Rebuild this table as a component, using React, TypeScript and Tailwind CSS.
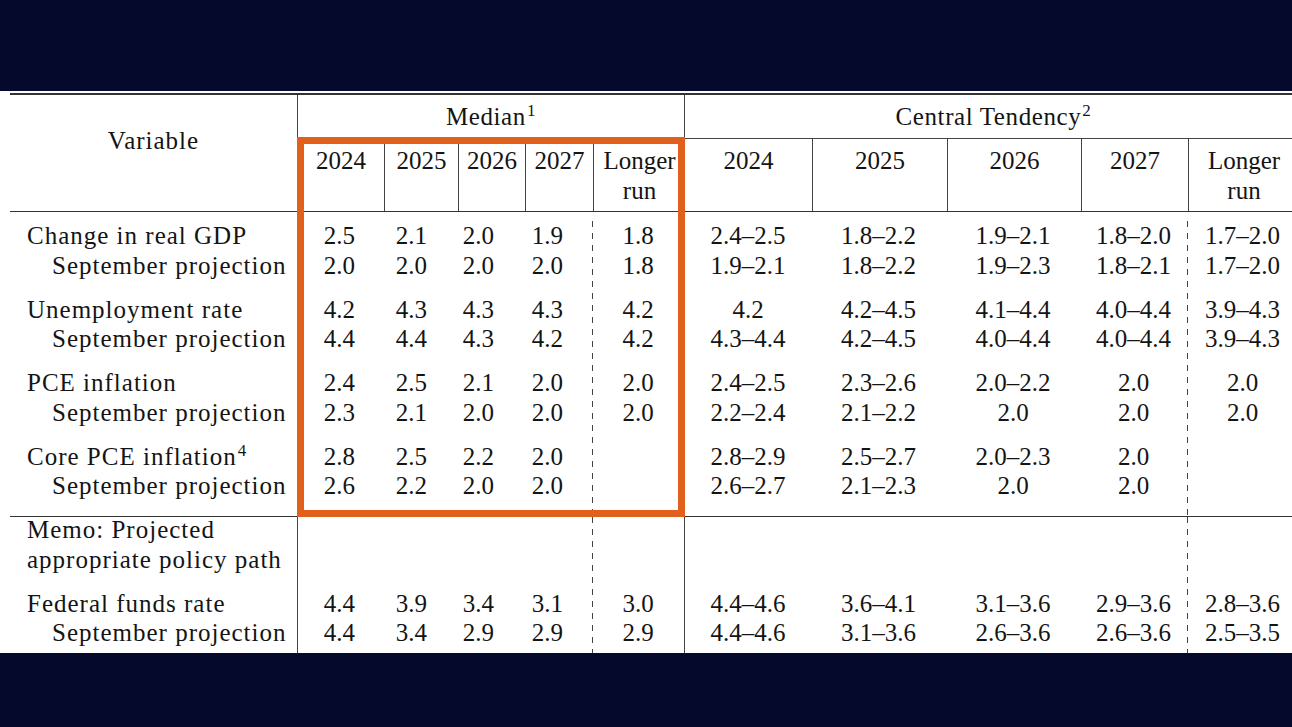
import React from 'react'

type Row = { label: string; sup?: string; sub?: boolean; v: string[] }

const E = ['', '', '', '', '', '', '', '', '', '']

const upper: Row[][] = [
  [
    { label: 'Change in real GDP', v: ['2.5', '2.1', '2.0', '1.9', '1.8', '2.4–2.5', '1.8–2.2', '1.9–2.1', '1.8–2.0', '1.7–2.0'] },
    { label: 'September projection', sub: true, v: ['2.0', '2.0', '2.0', '2.0', '1.8', '1.9–2.1', '1.8–2.2', '1.9–2.3', '1.8–2.1', '1.7–2.0'] },
  ],
  [
    { label: 'Unemployment rate', v: ['4.2', '4.3', '4.3', '4.3', '4.2', '4.2', '4.2–4.5', '4.1–4.4', '4.0–4.4', '3.9–4.3'] },
    { label: 'September projection', sub: true, v: ['4.4', '4.4', '4.3', '4.2', '4.2', '4.3–4.4', '4.2–4.5', '4.0–4.4', '4.0–4.4', '3.9–4.3'] },
  ],
  [
    { label: 'PCE inflation', v: ['2.4', '2.5', '2.1', '2.0', '2.0', '2.4–2.5', '2.3–2.6', '2.0–2.2', '2.0', '2.0'] },
    { label: 'September projection', sub: true, v: ['2.3', '2.1', '2.0', '2.0', '2.0', '2.2–2.4', '2.1–2.2', '2.0', '2.0', '2.0'] },
  ],
  [
    { label: 'Core PCE inflation', sup: '4', v: ['2.8', '2.5', '2.2', '2.0', '', '2.8–2.9', '2.5–2.7', '2.0–2.3', '2.0', ''] },
    { label: 'September projection', sub: true, v: ['2.6', '2.2', '2.0', '2.0', '', '2.6–2.7', '2.1–2.3', '2.0', '2.0', ''] },
  ],
]

const lower: Row[][] = [
  [
    { label: 'Memo: Projected', v: E },
    { label: 'appropriate policy path', v: E },
  ],
  [
    { label: 'Federal funds rate', v: ['4.4', '3.9', '3.4', '3.1', '3.0', '4.4–4.6', '3.6–4.1', '3.1–3.6', '2.9–3.6', '2.8–3.6'] },
    { label: 'September projection', sub: true, v: ['4.4', '3.4', '2.9', '2.9', '2.9', '4.4–4.6', '3.1–3.6', '2.6–3.6', '2.6–3.6', '2.5–3.5'] },
  ],
]

const dash =
  'bg-[linear-gradient(to_bottom,#444_0_6px,transparent_6px_12px)] bg-[length:1px_12px] bg-repeat-y'

const cols = [
  'w-[287px] pl-[17px] text-left tracking-[1px]',
  'w-[86px] border-l border-[#444] text-right pr-[28px]',
  'w-[74px] text-right pr-[30px]',
  'w-[67px] text-right pr-[30px]',
  'w-[68px] text-right pr-[29px]',
  `w-[92px] text-center ${dash}`,
  'w-[127px] border-l border-[#444] text-center',
  'w-[135px] text-center',
  'w-[134px] text-center',
  'w-[107px] text-center',
  `w-[111px] text-center ${dash}`,
]

function Section({ groups, className, lift }: { groups: Row[][]; className: string; lift?: boolean }) {
  return (
    <div className={`flex ${className}`}>
      {cols.map((col, ci) => (
        <div key={ci} className={`${col} shrink-0 flex flex-col gap-[14.5px]`}>
          {groups.map((g, gi) => (
            <div key={gi} className={lift && gi === 0 ? '-mt-[2px]' : ''}>
              {g.map((r, ri) => (
                <div key={ri} className="h-[29.5px] leading-[29.5px] whitespace-nowrap">
                  {ci === 0 ? (
                    <span className={r.sub ? 'pl-[25px]' : ''}>
                      {r.label}
                      {r.sup && <sup className="text-[17px] ml-[1px]">{r.sup}</sup>}
                    </span>
                  ) : (
                    r.v[ci - 1]
                  )}
                </div>
              ))}
            </div>
          ))}
        </div>
      ))}
    </div>
  )
}

function YearCell({ w, line, children }: { w: string; line?: boolean; children: React.ReactNode }) {
  return (
    <div
      className={`${w} shrink-0 pt-[7px] text-center leading-[29.5px] ${line ? 'border-l border-[#444]' : ''}`}
    >
      {children}
    </div>
  )
}

export default function App() {
  return (
    <div className="w-[1292px] h-[727px] overflow-hidden bg-[#050a2d] flex flex-col font-['Liberation_Serif','Times_New_Roman',serif] text-[25px] text-[#141414]">
      <div className="h-[91px] shrink-0" />
      <div className="relative h-[562px] shrink-0 bg-white pt-[2px] overflow-hidden">
        <div className="ml-[10px] w-[1288px]">
          {/* header */}
          <div className="flex border-t-2 border-b border-[#333]">
            <div className="w-[287px] shrink-0 pt-[31px] text-center leading-[30px] tracking-[1px]">
              Variable
            </div>
            <div className="w-[387px] shrink-0 border-l border-[#444] flex flex-col">
              <div className="h-[44px] border-b border-[#444] flex items-center justify-center tracking-[0.6px]">
                <span>
                  Median<sup className="text-[17px] ml-[1px]">1</sup>
                </span>
              </div>
              <div className="h-[72px] flex">
                <YearCell w="w-[86px]">2024</YearCell>
                <YearCell w="w-[74px]" line>2025</YearCell>
                <YearCell w="w-[67px]" line>2026</YearCell>
                <YearCell w="w-[68px]" line>2027</YearCell>
                <YearCell w="w-[92px]" line>
                  <div>Longer</div>
                  <div>run</div>
                </YearCell>
              </div>
            </div>
            <div className="w-[614px] shrink-0 border-l border-[#444] flex flex-col">
              <div className="h-[44px] border-b border-[#444] flex items-center justify-center tracking-[0.6px]">
                <span className="ml-[4px]">
                  Central Tendency<sup className="text-[17px] ml-[1px]">2</sup>
                </span>
              </div>
              <div className="h-[72px] flex">
                <YearCell w="w-[127px]">2024</YearCell>
                <YearCell w="w-[135px]" line>2025</YearCell>
                <YearCell w="w-[134px]" line>2026</YearCell>
                <YearCell w="w-[107px]" line>2027</YearCell>
                <YearCell w="w-[111px]" line>
                  <div>Longer</div>
                  <div>run</div>
                </YearCell>
              </div>
            </div>
          </div>

          {/* body */}
          <Section groups={upper} className="h-[305px] pt-[9px] border-b border-[#333]" />
          <Section groups={lower} className="h-[136px] pt-0" lift />
        </div>

        {/* highlight box */}
        <div className="absolute left-[297px] top-[46px] w-[388px] h-[380px] border-[7px] border-[#e0601c] pointer-events-none" />
      </div>
      <div className="flex-1" />
    </div>
  )
}
